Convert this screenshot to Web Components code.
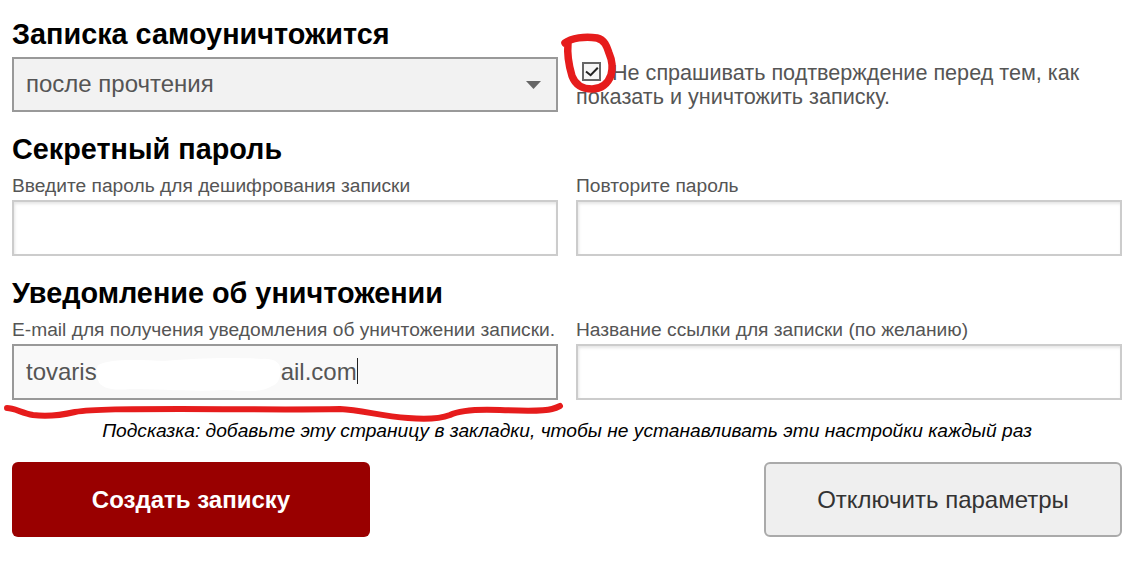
<!DOCTYPE html>
<html lang="ru">
<head>
<meta charset="utf-8">
<title>Параметры записки</title>
<style>
  html, body { margin: 0; background: #fff; }
  body { font-family: "Liberation Sans", Arial, sans-serif; }
</style>
</head>
<body>
<note-form></note-form>

<script>
// section heading
class NoteHeading extends HTMLElement {
  constructor() {
    super();
    this.attachShadow({ mode: "open" }).innerHTML = `
      <style>
        :host { display: block; font-size: 28.8px; line-height: 32px; font-weight: bold; color: #000; white-space: nowrap; }
      </style>
      <slot></slot>`;
  }
}
customElements.define("note-heading", NoteHeading);

// fake select box
class NoteSelect extends HTMLElement {
  constructor() {
    super();
    this.attachShadow({ mode: "open" }).innerHTML = `
      <style>
        :host { display: flex; align-items: center; justify-content: space-between; box-sizing: border-box; height: 55px; padding: 0 15px 2px 12px; border: 2px solid #999; background: #f2f2f2; color: #555; font-size: 24px; }
        svg { display: block; margin-top: 3px; }
      </style>
      <span><slot></slot></span>
      <svg width="15" height="8" viewBox="0 0 15 8"><path d="M0 0H15L7.5 8Z" fill="#666"/></svg>`;
  }
}
customElements.define("note-select", NoteSelect);

// label + text box
class NoteField extends HTMLElement {
  constructor() {
    super();
    const label = this.getAttribute("label");
    this.attachShadow({ mode: "open" }).innerHTML = `
      <style>
        :host { display: block; }
        .lbl { font-size: 19.2px; line-height: 20px; color: #555; margin-bottom: 4px; white-space: nowrap; }
        .box { box-sizing: border-box; height: 56px; border: 2px solid #ccc; background: #fff; box-shadow: inset 1px 2px 3px rgba(0,0,0,.1); display: flex; align-items: center; padding: 0 12px; font-size: 24px; color: #555; white-space: pre; }
        :host([active]) .box { border-color: #999; background: #f9f9f9; box-shadow: none; }
        .caret { display: none; width: 1px; height: 26px; background: #222; margin-top: -2px; }
        :host([active]) .caret { display: block; }
      </style>
      <div class="lbl"></div>
      <div class="box"><slot></slot><span class="caret"></span></div>`;
    this.shadowRoot.querySelector(".lbl").textContent = label;
  }
}
customElements.define("note-field", NoteField);

// checkbox with wrapped text
class NoteCheck extends HTMLElement {
  constructor() {
    super();
    this.attachShadow({ mode: "open" }).innerHTML = `
      <style>
        :host { display: block; font-size: 21.6px; line-height: 24px; color: #555; padding-top: 4px; }
        .tick { display: inline-block; vertical-align: -1px; margin: 0 11px 0 6px; width: 19px; height: 19px; }
        svg { display: block; }
      </style>
      <span class="tick"><svg width="19" height="19" viewBox="0 0 19 19"><rect x="1" y="1" width="17" height="17" fill="#f6f6f6" stroke="#666" stroke-width="2"/><path d="M4 9.5 8.6 13.2 15.8 5.8" fill="none" stroke="#222" stroke-width="2"/></svg></span><slot></slot>`;
  }
}
customElements.define("note-check", NoteCheck);

class NoteButton extends HTMLElement {
  constructor() {
    super();
    this.attachShadow({ mode: "open" }).innerHTML = `
      <style>
        :host { display: flex; align-items: center; justify-content: center; box-sizing: border-box; width: 358px; height: 75px; border-radius: 6px; font-size: 24px; border: 2px solid #aaa; background: #efefef; color: #333; }
        :host([primary]) { border: 0; background: #990000; color: #fff; font-weight: bold; }
      </style>
      <slot></slot>`;
  }
}
customElements.define("note-button", NoteButton);

// the red marker strokes and the white smear someone drew on the screenshot
class NoteMarks extends HTMLElement {
  constructor() {
    super();
    this.attachShadow({ mode: "open" }).innerHTML = `
      <style>
        :host { position: absolute; left: 0; top: 0; width: 1140px; height: 570px; pointer-events: none; }
        svg { display: block; }
      </style>
      <svg width="1140" height="570" viewBox="0 0 1140 570">
        <path d="M565 43C571 38 585 36 597 38 605 40 607 47 609 53 612 60 613 68 611 75 608 84 601 89 592 89 582 89 575 84 572 76 569 66 567 54 568 43" fill="none" stroke="#e61c1c" stroke-width="7.5" stroke-linecap="round" stroke-linejoin="round"/>
        <path d="M7 408C14 408 22 413 33 415 48 417 62 415 75 412 92 409 130 409 180 409 230 409 290 410 340 409 362 410 380 416 408 418 430 420 442 418 450 415 460 410 475 409 500 410 525 411 545 411 552 409 556 408 558 407 560 406" fill="none" stroke="#e61c1c" stroke-width="6" stroke-linecap="round" stroke-linejoin="round"/>
        <path d="M98 365C112 358 140 360 165 361 195 358 235 357 262 359 272 358 280 362 280 368 281 376 279 384 272 386 262 393 245 391 225 390 195 392 160 389 130 389 112 391 100 388 98 380 96 375 96 369 98 365Z" fill="#fff"/>
      </svg>`;
  }
}
customElements.define("note-marks", NoteMarks);

class NoteForm extends HTMLElement {
  constructor() {
    super();
    this.attachShadow({ mode: "open" }).innerHTML = `
      <style>
        :host { display: block; position: relative; box-sizing: border-box; width: 1140px; height: 570px; padding: 18px 18px 0 12px; font-family: "Liberation Sans", Arial, sans-serif; }
        .cols { display: grid; grid-template-columns: 546px 546px; column-gap: 18px; }
        .first note-heading { margin-bottom: 7px; }
        .span { grid-column: 1 / 3; margin-bottom: 11px; }
        .pw { margin-top: 21px; }
        .hint { margin-top: 21px; text-align: center; font-size: 19.2px; line-height: 20px; font-style: italic; color: #000; white-space: nowrap; }
        .acts { margin-top: 21px; display: flex; justify-content: space-between; }
        .smeared { margin-left: 184px; }
      </style>
      <div class="cols first">
        <div>
          <note-heading>Записка самоуничтожится</note-heading>
          <note-select>после прочтения</note-select>
        </div>
        <note-check style="margin-top:39px">Не спрашивать подтверждение перед тем, как показать и уничтожить записку.</note-check>
      </div>
      <div class="cols pw">
        <note-heading class="span">Секретный пароль</note-heading>
        <note-field label="Введите пароль для дешифрования записки"></note-field>
        <note-field label="Повторите пароль"></note-field>
      </div>
      <div class="cols pw">
        <note-heading class="span">Уведомление об уничтожении</note-heading>
        <note-field active label="E-mail для получения уведомления об уничтожении записки."><span>tovaris</span><span class="smeared">ail.com</span></note-field>
        <note-field label="Название ссылки для записки (по желанию)"></note-field>
      </div>
      <div class="hint">Подсказка: добавьте эту страницу в закладки, чтобы не устанавливать эти настройки каждый раз</div>
      <div class="acts">
        <note-button primary>Создать записку</note-button>
        <note-button>Отключить параметры</note-button>
      </div>
      <note-marks></note-marks>`;
  }
}
customElements.define("note-form", NoteForm);
</script>
</body>
</html>
